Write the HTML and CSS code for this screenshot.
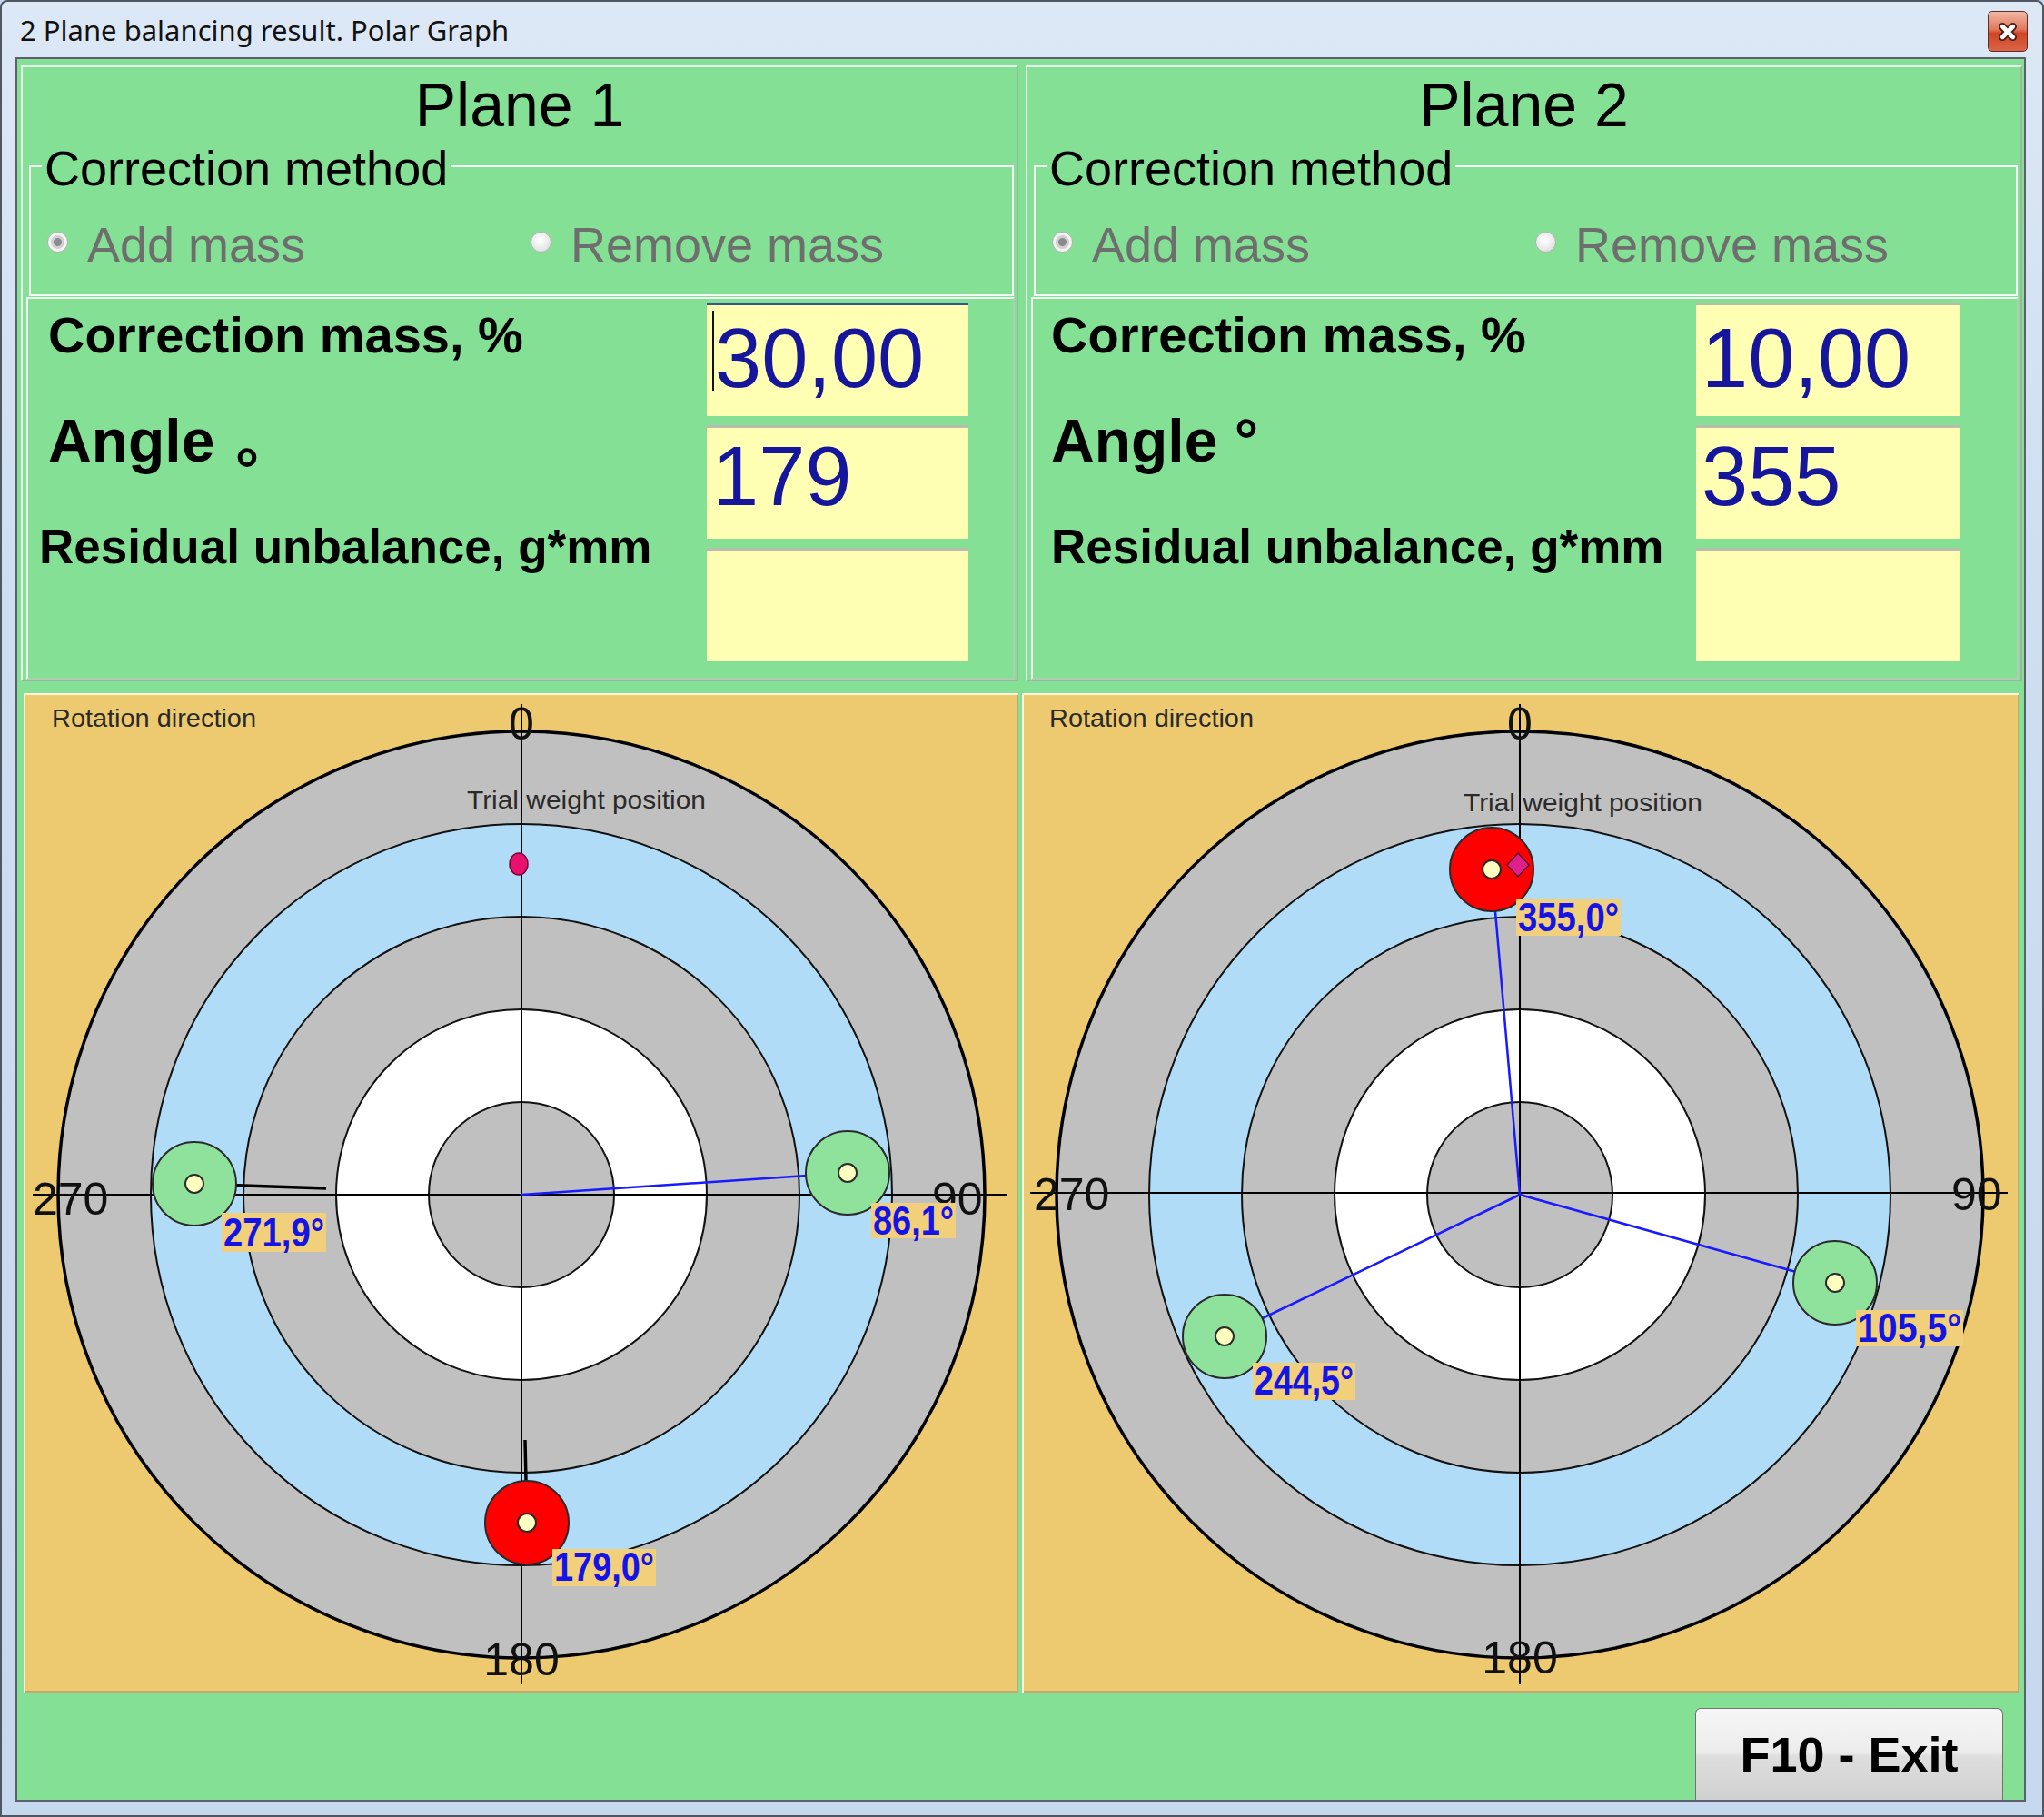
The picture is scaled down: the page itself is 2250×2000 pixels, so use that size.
FILE: index.html
```html
<!DOCTYPE html>
<html>
<head>
<meta charset="utf-8">
<title>2 Plane balancing result. Polar Graph</title>
<link rel="stylesheet" href="styles.css">
</head>
<body>
<div class="window">
  <div class="titlebar">
    <span class="title">2 Plane balancing result. Polar Graph</span>
    <div class="close">
      <svg viewBox="0 0 44 45" width="44" height="45">
        <path d="M16 17 L28 29 M28 17 L16 29" stroke="#4a1e14" stroke-width="9" stroke-linecap="round"/>
        <path d="M16 17 L28 29 M28 17 L16 29" stroke="#ffffff" stroke-width="5" stroke-linecap="round"/>
      </svg>
    </div>
  </div>
  <div class="client">
    <div class="planes">
      <section class="plane p1">
        <h1 class="plane-title">Plane 1</h1>
        <fieldset class="method">
          <legend>Correction method</legend>
          <div class="radios">
            <label class="radio first"><span class="dot checked"></span>Add mass</label>
            <label class="radio"><span class="dot"></span>Remove mass</label>
          </div>
        </fieldset>
        <div class="values">
          <div class="labels">
            <div class="lbl lbl-mass">Correction mass, %</div>
            <div class="lbl lbl-angle">Angle <span class="deg-low">°</span></div>
            <div class="lbl lbl-resid">Residual unbalance, g*mm</div>
          </div>
          <div class="inputs">
            <div class="field f-mass focus"><span class="caret"></span>30,00</div>
            <div class="field f-angle">179</div>
            <div class="field f-resid"></div>
          </div>
        </div>
      </section>
      <section class="plane p2">
        <h1 class="plane-title">Plane 2</h1>
        <fieldset class="method">
          <legend>Correction method</legend>
          <div class="radios">
            <label class="radio first"><span class="dot checked"></span>Add mass</label>
            <label class="radio"><span class="dot"></span>Remove mass</label>
          </div>
        </fieldset>
        <div class="values">
          <div class="labels">
            <div class="lbl lbl-mass">Correction mass, %</div>
            <div class="lbl lbl-angle">Angle °</div>
            <div class="lbl lbl-resid">Residual unbalance, g*mm</div>
          </div>
          <div class="inputs">
            <div class="field f-mass">10,00</div>
            <div class="field f-angle">355</div>
            <div class="field f-resid"></div>
          </div>
        </div>
      </section>
    </div>

    <div class="graphs">
      <div class="graph g1">
        <svg class="polar" viewBox="0 0 1095 1100" width="1095" height="1100">
          <circle cx="548" cy="552" r="510" fill="#c0c0c0" stroke="#000" stroke-width="3.5"/>
          <circle cx="548" cy="552" r="408" fill="#b0dcf8" stroke="#111" stroke-width="2"/>
          <circle cx="548" cy="552" r="306" fill="#c0c0c0" stroke="#111" stroke-width="2"/>
          <circle cx="548" cy="552" r="204" fill="#ffffff" stroke="#111" stroke-width="2"/>
          <circle cx="548" cy="552" r="102" fill="#c0c0c0" stroke="#111" stroke-width="2"/>
          <text class="small" x="31" y="37" textLength="225" lengthAdjust="spacingAndGlyphs">Rotation direction</text>
          <text class="small" x="488" y="127" textLength="263" lengthAdjust="spacingAndGlyphs">Trial weight position</text>
          <line x1="548" y1="12" x2="548" y2="1091" stroke="#000" stroke-width="2"/>
          <line x1="10" y1="552" x2="1082" y2="552" stroke="#000" stroke-width="2"/>
          <text class="axis" x="548" y="51" text-anchor="middle">0</text>
          <text class="axis" x="548" y="1081" text-anchor="middle">180</text>
          <text class="axis" x="10" y="574">270</text>
          <text class="axis" x="1000" y="574">90</text>
          <line x1="333" y1="545" x2="188" y2="540" stroke="#000" stroke-width="3.5"/>
          <line x1="552" y1="822" x2="554" y2="913" stroke="#000" stroke-width="3.5"/>
          <line x1="548" y1="552" x2="907" y2="528" stroke="#1a1aff" stroke-width="2.5"/>
          <ellipse cx="545" cy="188" rx="10" ry="12" fill="#e8126e" stroke="#7a0030" stroke-width="1.5"/>
          <circle cx="188" cy="540" r="46" fill="#8ee29c" stroke="#2a2a2a" stroke-width="2"/>
          <circle cx="188" cy="540" r="10" fill="#ffffc0" stroke="#2a2a2a" stroke-width="2"/>
          <circle cx="907" cy="528" r="46" fill="#8ee29c" stroke="#2a2a2a" stroke-width="2"/>
          <circle cx="907" cy="528" r="10" fill="#ffffc0" stroke="#2a2a2a" stroke-width="2"/>
          <circle cx="554" cy="913" r="46" fill="#ff0000" stroke="#2a2a2a" stroke-width="2"/>
          <circle cx="554" cy="913" r="10" fill="#ffffc0" stroke="#2a2a2a" stroke-width="2"/>
          <rect class="vbox" x="218" y="572" width="115" height="43"/>
          <text class="val" x="220" y="609" textLength="111" lengthAdjust="spacingAndGlyphs">271,9°</text>
          <rect class="vbox" x="933" y="561" width="93" height="39"/>
          <text class="val" x="935" y="596" textLength="89" lengthAdjust="spacingAndGlyphs">86,1°</text>
          <rect class="vbox" x="582" y="942" width="114" height="41"/>
          <text class="val" x="584" y="977" textLength="110" lengthAdjust="spacingAndGlyphs">179,0°</text>
        </svg>
      </div>
      <div class="graph g2">
        <svg class="polar" viewBox="0 0 1098 1100" width="1098" height="1100">
          <circle cx="548" cy="552" r="510" fill="#c0c0c0" stroke="#000" stroke-width="3.5"/>
          <circle cx="548" cy="552" r="408" fill="#b0dcf8" stroke="#111" stroke-width="2"/>
          <circle cx="548" cy="552" r="306" fill="#c0c0c0" stroke="#111" stroke-width="2"/>
          <circle cx="548" cy="552" r="204" fill="#ffffff" stroke="#111" stroke-width="2"/>
          <circle cx="548" cy="552" r="102" fill="#c0c0c0" stroke="#111" stroke-width="2"/>
          <text class="small" x="30" y="37" textLength="225" lengthAdjust="spacingAndGlyphs">Rotation direction</text>
          <text class="small" x="486" y="130" textLength="263" lengthAdjust="spacingAndGlyphs">Trial weight position</text>
          <line x1="548" y1="12" x2="548" y2="1091" stroke="#000" stroke-width="2"/>
          <line x1="9" y1="550" x2="1085" y2="550" stroke="#000" stroke-width="2"/>
          <text class="axis" x="548" y="51" text-anchor="middle">0</text>
          <text class="axis" x="548" y="1079" text-anchor="middle">180</text>
          <text class="axis" x="13" y="569">270</text>
          <text class="axis" x="1023" y="569">90</text>
          <line x1="548" y1="552" x2="517" y2="194" stroke="#1a1aff" stroke-width="2.5"/>
          <line x1="548" y1="552" x2="895" y2="649" stroke="#1a1aff" stroke-width="2.5"/>
          <line x1="548" y1="552" x2="223" y2="708" stroke="#1a1aff" stroke-width="2.5"/>
          <circle cx="517" cy="194" r="46" fill="#ff0000" stroke="#2a2a2a" stroke-width="2"/>
          <circle cx="517" cy="194" r="10" fill="#ffffc0" stroke="#2a2a2a" stroke-width="2"/>
          <path d="M546 176 L558 189 L546 202 L534 189 Z" fill="#e0208a" stroke="#5a0030" stroke-width="1.5"/>
          <circle cx="895" cy="649" r="46" fill="#8ee29c" stroke="#2a2a2a" stroke-width="2"/>
          <circle cx="895" cy="649" r="10" fill="#ffffc0" stroke="#2a2a2a" stroke-width="2"/>
          <circle cx="223" cy="708" r="46" fill="#8ee29c" stroke="#2a2a2a" stroke-width="2"/>
          <circle cx="223" cy="708" r="10" fill="#ffffc0" stroke="#2a2a2a" stroke-width="2"/>
          <rect class="vbox" x="544" y="226" width="115" height="41"/>
          <text class="val" x="546" y="262" textLength="111" lengthAdjust="spacingAndGlyphs">355,0°</text>
          <rect class="vbox" x="918" y="679" width="118" height="40"/>
          <text class="val" x="920" y="714" textLength="114" lengthAdjust="spacingAndGlyphs">105,5°</text>
          <rect class="vbox" x="254" y="737" width="113" height="41"/>
          <text class="val" x="256" y="772" textLength="109" lengthAdjust="spacingAndGlyphs">244,5°</text>
        </svg>
      </div>
    </div>

    <div class="bottom">
      <button class="exit">F10 - Exit</button>
    </div>
  </div>
</div>
</body>
</html>
```

FILE: styles.css
```css
* { box-sizing: border-box; margin: 0; padding: 0; }
html, body { width: 2250px; height: 2000px; overflow: hidden; }
body { font-family: "Liberation Sans", Arial, sans-serif; background: #c4d6ec; }

.window {
  width: 2250px;
  height: 2000px;
  display: flex;
  flex-direction: column;
  padding: 0 18px 15px 15px;
  border: 2px solid #4f5862;
  border-radius: 8px 8px 0 0;
  background: linear-gradient(180deg, #dde8f6 0%, #cfdef1 30%, #c6d8ee 100%);
}

.titlebar {
  height: 61px;
  display: flex;
  align-items: center;
  justify-content: space-between;
}
.title {
  margin-left: 5px;
  font-family: "Noto Sans", "Open Sans", sans-serif;
  font-size: 31px;
  color: #111;
  letter-spacing: 0;
}
.close {
  align-self: flex-start;
  margin-top: 10px;
  margin-right: -2px;
  width: 44px;
  height: 45px;
  border: 1px solid #5a3026;
  border-radius: 5px;
  background: linear-gradient(180deg, #f0b8a6 0%, #e2785c 45%, #cf4624 55%, #da6446 100%);
  display: flex;
  align-items: center;
  justify-content: center;
}
.close svg { display: block; }

.client {
  flex: 1;
  display: flex;
  flex-direction: column;
  background: #84e094;
  border: 2px solid #5e5e6e;
  padding: 7px 2px 0 4px;
}

/* ---------- planes ---------- */
.planes { display: flex; gap: 8px; height: 678px; }
.plane {
  display: flex;
  flex-direction: column;
  border: 2px solid;
  border-color: #e6fbe8 #98b89c #98b89c #e6fbe8;
}
.p1 { width: 1098px; }
.p2 { width: 1097px; }

.plane-title {
  height: 75px;
  padding-top: 8px;
  line-height: 67px;
  font-size: 68px;
  font-weight: normal;
  text-align: center;
  color: #000;
}

.method {
  height: 177px;
  margin: 0 3px 0 7px;
  border: 2px solid #f2fcf2;
  border-top-color: #f6fff6;
}
.method legend {
  margin-left: 12px;
  padding: 5px 3px 0 3px;
  line-height: 62px;
  font-size: 54px;
  color: #000;
}
.radios {
  display: flex;
  margin-top: 22px;
  padding-left: 18px;
  height: 62px;
}
.radio {
  display: flex;
  align-items: center;
  gap: 21px;
  font-size: 54px;
  line-height: 62px;
  color: #6e6e6e;
}
.radio.first { width: 532px; }
.dot {
  width: 23px;
  height: 23px;
  margin-top: -6px;
  border-radius: 50%;
  border: 1px solid #b4b4b4;
  background: radial-gradient(circle at 45% 40%, #ffffff 0, #f0f0f0 40%, #d6d6d6 100%);
}
.dot.checked {
  background: radial-gradient(circle, #8a8a8a 0, #8a8a8a 4px, #d0d0d0 5px, #d0d0d0 7px, #f4f4f4 8px);
}

.values {
  flex: 1;
  display: flex;
  margin: 1px 2px 0 4px;
  border: 2px solid;
  border-color: #f2fcf2 #b0ccb3 #b0ccb3 #f2fcf2;
}
.labels { flex: 1; display: flex; flex-direction: column; padding-left: 22px; }
.p2 .labels { padding-left: 20px; }
.lbl { font-weight: bold; color: #000; white-space: nowrap; }
.lbl-mass { font-size: 56px; line-height: 60px; margin-top: 10px; }
.lbl-angle { font-size: 66px; line-height: 72px; margin-top: 50px; }
.lbl-resid { font-size: 53px; line-height: 60px; margin-top: 51px; margin-left: -10px; }
.p2 .lbl-resid { margin-left: 0; }
.deg-low { position: relative; top: 0.48em; margin-left: 4px; }

.inputs {
  width: 288px;
  margin: 4px 49px 0 0;
  display: flex;
  flex-direction: column;
  gap: 10px;
}
.p2 .inputs { width: 291px; margin-right: 62px; }
.field {
  position: relative;
  height: 125px;
  background: #ffffb4;
  border-top: 3px solid #b8bcae;
  padding-left: 6px;
  font-size: 92px;
  line-height: 92px;
  color: #16169c;
}
.f-mass { padding-top: 12px; }
.f-angle { padding-top: 7px; }
.field.focus { border-top-color: #33568e; padding-left: 9px; }
.caret {
  position: absolute;
  left: 6px;
  top: 6px;
  width: 2px;
  height: 88px;
  background: #111;
}

/* ---------- graphs ---------- */
.graphs {
  display: flex;
  gap: 4px;
  height: 1100px;
  margin: 13px 3px 0 3px;
}
.graph {
  background: #edca70;
  box-shadow: inset 2px 2px 0 #fff6dc, inset -2px -2px 0 #c4a672;
}
.g1 { width: 1095px; }
.g2 { width: 1098px; }
.polar { display: block; }
.polar text { font-family: "Liberation Sans", Arial, sans-serif; }
.polar .small { font-size: 28px; fill: #2a2a2a; }
.polar .axis { font-size: 50px; fill: #111; }
.polar .val { font-size: 44px; font-weight: bold; fill: #1414e6; }
.polar .vbox { fill: #f2cf7a; }

/* ---------- bottom ---------- */
.bottom {
  flex: 1;
  margin-top: 3px;
  padding: 14px 21px 0 0;
  display: flex;
  justify-content: flex-end;
  align-items: stretch;
}
.exit {
  width: 339px;
  border: 1px solid #727272;
  border-bottom: none;
  border-radius: 6px 6px 0 0;
  background: linear-gradient(180deg, #f6f6f6 0%, #ececec 48%, #dedede 52%, #d0d0d0 100%);
  font-family: "Liberation Sans", Arial, sans-serif;
  font-weight: bold;
  font-size: 54px;
  color: #000;
}
```
